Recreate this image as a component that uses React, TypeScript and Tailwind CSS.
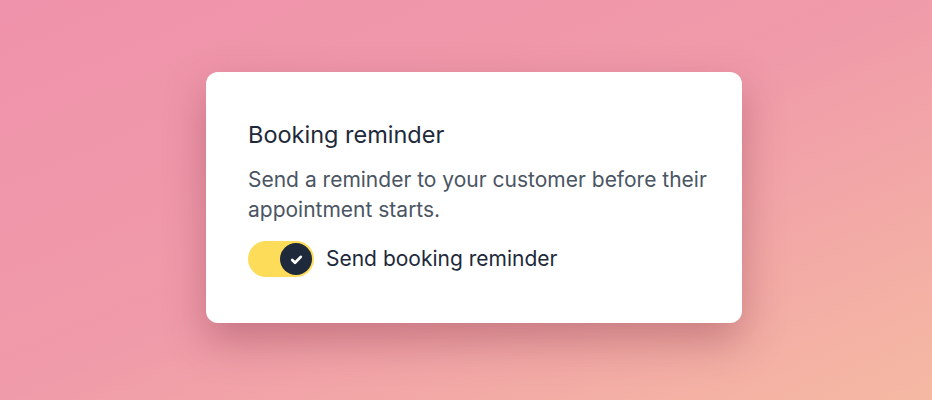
import { useState } from 'react';

export default function App() {
  const [enabled, setEnabled] = useState(true);

  return (
    <div className="w-[932px] h-[400px] flex items-center justify-center pl-[16px] pb-[5px] bg-gradient-to-br from-[#ef92ab] via-[#f09ba9] to-[#f5b9a2] font-['Inter','Liberation_Sans',sans-serif]">
      {/* Card */}
      <div className="w-[536px] h-[251px] bg-white rounded-[12px] shadow-[0_18px_40px_rgba(120,40,60,0.35)] pl-[42px] pr-[30px] pt-[47px]">
        <h2 className="text-[23.5px] leading-[32px] text-[#1e293b]">Booking reminder</h2>
        <p className="mt-[14px] text-[21px] leading-[30px] text-[#4b5563]">
          Send a reminder to your customer before their appointment starts.
        </p>

        {/* Toggle row */}
        <div className="mt-[16px] flex items-center gap-[12px]">
          <button
            onClick={() => setEnabled(!enabled)}
            className={
              enabled
                ? 'w-[66px] h-[36px] rounded-full bg-[#fddc5a] flex items-center justify-end p-[2px]'
                : 'w-[66px] h-[36px] rounded-full bg-[#e5e7eb] flex items-center justify-start p-[2px]'
            }
          >
            <span className="w-[32px] h-[32px] rounded-full bg-[#1e293b] flex items-center justify-center">
              {enabled && (
                <svg width="17" height="17" viewBox="0 0 16 16" fill="none">
                  <path d="M4 8.4l2.6 2.6L12 5.5" stroke="white" strokeWidth="2.6" strokeLinecap="round" strokeLinejoin="round" />
                </svg>
              )}
            </span>
          </button>
          <span className="text-[21px] leading-[36px] text-[#1e293b]">Send booking reminder</span>
        </div>
      </div>
    </div>
  );
}
